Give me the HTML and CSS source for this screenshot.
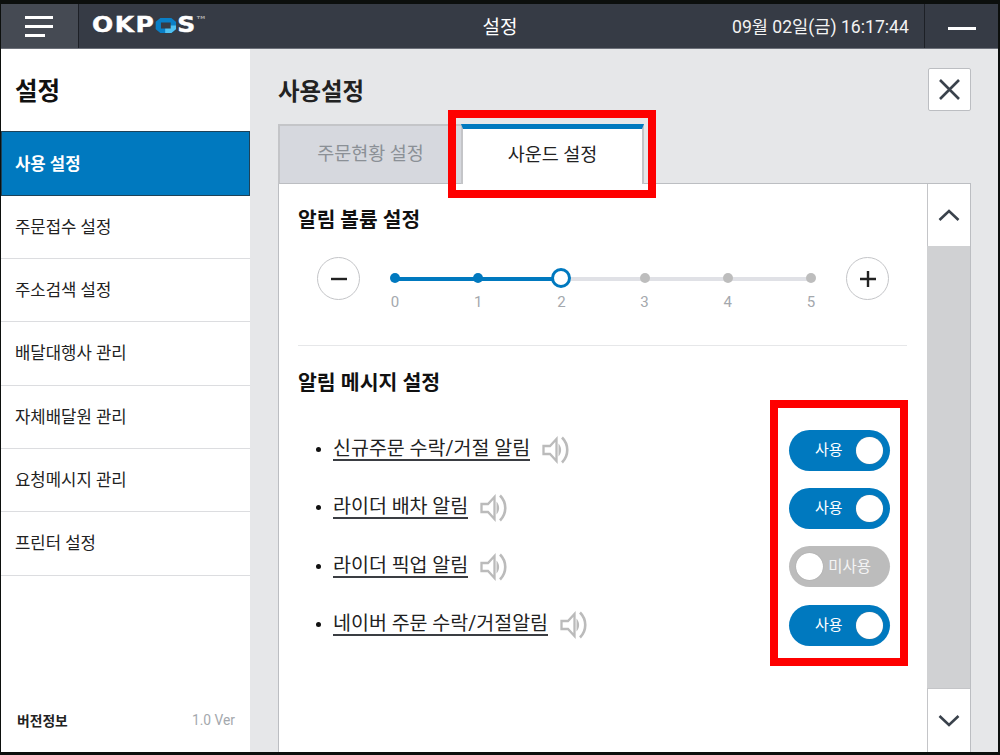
FILE: index.html
```html
<!DOCTYPE html>
<html lang="ko">
<head>
<meta charset="UTF-8">
<meta name="viewport" content="width=device-width, initial-scale=1.0">
<title>설정</title>
<link rel="stylesheet" href="styles.css">
</head>
<body>
<div class="window">
  <!-- Top bar -->
  <header class="topbar">
    <button class="menu-btn"><span></span><span></span><span></span></button>
    <div class="logo">
      <div class="logo-mark">
        <span class="logo-text">OKP</span>
        <svg class="logo-o" width="17" height="15" viewBox="0 0 17 15">
          <path d="M4 0h9l4 4v7l-4 4H4l-4-4V4z" fill="#0a7fc6"/>
          <path d="M8 7.500h9V11l-4 4H8z" fill="#4fc1f2"/>
          <rect x="4.500" y="4.500" width="8" height="6" fill="#363b45"/>
        </svg>
        <span class="logo-text">S</span>
        <span class="logo-tm">TM</span>
      </div>
    </div>
    <div class="topbar-title">설정</div>
    <div class="clock">09월 02일(금) 16:17:44</div>
    <div class="minimize"><span></span></div>
  </header>

  <div class="body-wrap">
    <!-- Sidebar -->
    <aside class="sidebar">
      <h2 class="side-title">설정</h2>
      <ul class="side-menu">
        <li class="active">사용 설정</li>
        <li>주문접수 설정</li>
        <li>주소검색 설정</li>
        <li>배달대행사 관리</li>
        <li>자체배달원 관리</li>
        <li>요청메시지 관리</li>
        <li>프린터 설정</li>
      </ul>
      <div class="version">
        <strong>버전정보</strong>
        <span>1.0 Ver</span>
      </div>
    </aside>

    <!-- Main -->
    <main class="main">
      <div class="main-head">
        <h1>사용설정</h1>
        <button class="close-btn">
          <svg width="23" height="23" viewBox="0 0 23 23"><path d="M2 2l19 19M21 2L2 21" stroke="#3a424c" stroke-width="2.6" fill="none"/></svg>
        </button>
      </div>

      <div class="tabs">
        <div class="tab">주문현황 설정</div>
        <div class="tab tab-active">사운드 설정</div>
      </div>

      <div class="panel">
        <div class="panel-content">
          <h3 class="section-title">알림 볼륨 설정</h3>
          <div class="volume">
            <button class="round-btn">
              <svg width="16" height="16" viewBox="0 0 16 16"><path d="M0 8h16" stroke="#222" stroke-width="2.4"/></svg>
            </button>
            <div class="slider">
              <div class="slider-line"></div>
              <div class="slider-fill"></div>
              <div class="stop on"><i></i><span>0</span></div>
              <div class="stop on"><i></i><span>1</span></div>
              <div class="stop current"><i></i><span>2</span></div>
              <div class="stop"><i></i><span>3</span></div>
              <div class="stop"><i></i><span>4</span></div>
              <div class="stop"><i></i><span>5</span></div>
            </div>
            <button class="round-btn">
              <svg width="16" height="16" viewBox="0 0 16 16"><path d="M0 8h16M8 0v16" stroke="#222" stroke-width="2.4"/></svg>
            </button>
          </div>

          <h3 class="section-title msg-title">알림 메시지 설정</h3>
          <ul class="msg-list">
            <li>
              <a class="msg-link">신규주문 수락/거절 알림</a>
              <svg class="speaker" width="28" height="28" viewBox="0 0 28 28"><path d="M1.500 10h6.500l6.500-7v22l-6.500-7H1.500z" stroke="#bbb" stroke-width="2.300" fill="none"/><path d="M16.500 7.500c3.500 4 3.500 9 0 13z" fill="#bbb"/><path d="M20 1.500c7 7 7 18 0 25" stroke="#bbb" stroke-width="2.600" fill="none"/></svg>
              <div class="toggle on"><span>사용</span><b></b></div>
            </li>
            <li>
              <a class="msg-link">라이더 배차 알림</a>
              <svg class="speaker" width="28" height="28" viewBox="0 0 28 28"><path d="M1.500 10h6.500l6.500-7v22l-6.500-7H1.500z" stroke="#bbb" stroke-width="2.300" fill="none"/><path d="M16.500 7.500c3.500 4 3.500 9 0 13z" fill="#bbb"/><path d="M20 1.500c7 7 7 18 0 25" stroke="#bbb" stroke-width="2.600" fill="none"/></svg>
              <div class="toggle on"><span>사용</span><b></b></div>
            </li>
            <li>
              <a class="msg-link">라이더 픽업 알림</a>
              <svg class="speaker" width="28" height="28" viewBox="0 0 28 28"><path d="M1.500 10h6.500l6.500-7v22l-6.500-7H1.500z" stroke="#bbb" stroke-width="2.300" fill="none"/><path d="M16.500 7.500c3.500 4 3.500 9 0 13z" fill="#bbb"/><path d="M20 1.500c7 7 7 18 0 25" stroke="#bbb" stroke-width="2.600" fill="none"/></svg>
              <div class="toggle off"><b></b><span>미사용</span></div>
            </li>
            <li>
              <a class="msg-link">네이버 주문 수락/거절알림</a>
              <svg class="speaker" width="28" height="28" viewBox="0 0 28 28"><path d="M1.500 10h6.500l6.500-7v22l-6.500-7H1.500z" stroke="#bbb" stroke-width="2.300" fill="none"/><path d="M16.500 7.500c3.500 4 3.500 9 0 13z" fill="#bbb"/><path d="M20 1.500c7 7 7 18 0 25" stroke="#bbb" stroke-width="2.600" fill="none"/></svg>
              <div class="toggle on"><span>사용</span><b></b></div>
            </li>
          </ul>
        </div>

        <div class="scrollbar">
          <button class="scroll-btn">
            <svg width="22" height="12" viewBox="0 0 22 12"><path d="M1.500 11L11 2l9.500 9" stroke="#3a424c" stroke-width="2.600" fill="none"/></svg>
          </button>
          <div class="scroll-track"></div>
          <button class="scroll-btn scroll-down">
            <svg width="22" height="12" viewBox="0 0 22 12"><path d="M1.500 1L11 10l9.500-9" stroke="#3a424c" stroke-width="2.600" fill="none"/></svg>
          </button>
        </div>
      </div>
    </main>
  </div>

  <!-- annotation boxes on the screenshot -->
  <div class="mark mark-tab"></div>
  <div class="mark mark-toggles"></div>
</div>
</body>
</html>
```

FILE: styles.css
```css
* {
  box-sizing: border-box;
}
html, body {
  height: 100%;
}
body {
  margin: 0;
  background-color: #0c0f0d;
  font-family: Roboto, "Noto Sans CJK KR", sans-serif;
  color: #222;
  overflow: hidden;
}
button {
  padding: 0;
  font: inherit;
  cursor: pointer;
}
ul {
  list-style: none;
  margin: 0;
  padding: 0;
}
.window {
  position: relative;
  width: 997px;
  height: 748px;
  margin: 4px 0 0 1px;
  display: flex;
  flex-direction: column;
  overflow: hidden;
}

/* top bar */
.topbar {
  height: 45px;
  flex: none;
  display: flex;
  align-items: center;
  background-color: #363b45;
  border-bottom: 1px solid #6c7079;
  color: #fff;
}
.menu-btn {
  width: 78px;
  height: 44px;
  flex: none;
  display: flex;
  flex-direction: column;
  align-items: flex-start;
  justify-content: center;
  gap: 6px;
  padding-left: 24px;
  border: none;
  border-right: 1px solid #1d2026;
  background-color: #454a53;
}
.menu-btn span {
  display: block;
  height: 3px;
  width: 28px;
  background: #fff;
}
.menu-btn span:nth-child(3) {
  width: 20px;
}
.logo {
  width: 250px;
  flex: none;
  padding: 0 0 2px 13px;
}
.logo-mark {
  display: flex;
  align-items: center;
  transform: scaleX(1.22);
  transform-origin: left center;
  font-family: "DejaVu Sans", sans-serif;
  font-weight: bold;
}
.logo-text {
  font-size: 20.500px;
  line-height: 20px;
  letter-spacing: 1.2px;
  -webkit-text-stroke: 0.4px #fff;
}
.logo-o {
  flex: none;
  margin: 0 1px 0 0;
}
.logo-tm {
  font-size: 4px;
  line-height: 5px;
  color: #aaa;
  align-self: flex-start;
}
.topbar-title {
  width: 342px;
  flex: none;
  padding-bottom: 2px;
  text-align: center;
  font-size: 19px;
}
.clock {
  flex: 1;
  padding: 0 0 2px 61px;
  font-size: 17.600px;
  white-space: nowrap;
  color: #f2f2f2;
}
.minimize {
  width: 74px;
  height: 44px;
  flex: none;
  display: flex;
  align-items: center;
  padding: 5px 0 0 23px;
  border-left: 1px solid #1d2026;
}
.minimize span {
  display: block;
  width: 28px;
  height: 3px;
  background: #fff;
}

/* layout */
.body-wrap {
  flex: 1;
  display: flex;
  min-height: 0;
}

/* sidebar */
.sidebar {
  width: 249px;
  flex: none;
  display: flex;
  flex-direction: column;
  background: #fff;
}
.side-title {
  height: 82px;
  margin: 0;
  padding: 25px 0 0 14px;
  font-size: 24.500px;
  line-height: 36px;
  font-weight: bold;
  color: #111;
}
.side-menu li {
  height: 63.330px;
  padding: 0 0 2px 14px;
  display: flex;
  align-items: center;
  font-size: 16.700px;
  border-bottom: 1px solid #dcdde0;
  color: #222;
}
.side-menu li.active {
  height: 64.600px;
  background-color: #0079bf;
  border: 1px solid #1d4258;
  padding: 0 0 0 13px;
  color: #fff;
  font-weight: bold;
}
.version {
  margin-top: auto;
  height: 64px;
  padding: 0 15px 0 16px;
  display: flex;
  justify-content: space-between;
  align-items: center;
  font-size: 13.800px;
}
.version strong {
  color: #222;
}
.version span {
  color: #a4a8ad;
}

/* main */
.main {
  flex: 1;
  min-width: 0;
  padding: 0 27px 0 28px;
  display: flex;
  flex-direction: column;
  background-color: #e6e7e9;
}
.main-head {
  height: 75px;
  flex: none;
  display: flex;
  justify-content: space-between;
  padding-top: 19px;
}
.main-head h1 {
  margin: 0;
  font-size: 23.400px;
  line-height: 48px;
  font-weight: bold;
  color: #222;
}
.close-btn {
  width: 43px;
  height: 43px;
  display: flex;
  align-items: center;
  justify-content: center;
  background: #fff;
  border: 1px solid #bcbec2;
  border-radius: 2px;
}

/* tabs */
.tabs {
  height: 60px;
  flex: none;
  display: flex;
  margin-bottom: -1px;
  position: relative;
  z-index: 1;
}
.tab {
  width: 183px;
  padding-bottom: 6px;
  display: flex;
  align-items: center;
  justify-content: center;
  font-size: 18.500px;
  color: #8b9096;
  background-color: #d6d8de;
  border: 2px solid #c4c5c8;
  border-right: none;
  border-bottom: 1px solid #bcbec2;
}
.tab-active {
  color: #222;
  background: #fff;
  padding-bottom: 8px;
  border-top: 5px solid #0079bf;
  border-left: 2px solid #c4c5c8;
  border-right: 2px solid #c4c5c8;
  border-bottom: none;
}
.panel {
  flex: 1;
  min-height: 0;
  display: flex;
  background: #fff;
  border: 1px solid #bcbec2;
  border-bottom: none;
}
.panel-content {
  flex: 1;
  min-width: 0;
  padding: 0 20px 0 19px;
}
.section-title {
  margin: 0;
  font-size: 20.300px;
  line-height: 28px;
  font-weight: bold;
  color: #111;
}
.panel-content > .section-title:first-child {
  margin-top: 22px;
}

/* volume slider */
.volume {
  height: 112px;
  padding: 23px 18px 0 19px;
  display: flex;
  align-items: flex-start;
  border-bottom: 1px solid #e6e7e9;
}
.round-btn {
  width: 43px;
  height: 43px;
  flex: none;
  display: flex;
  align-items: center;
  justify-content: center;
  background: #fff;
  border: 1px solid #c4c5c8;
  border-radius: 50%;
}
.slider {
  position: relative;
  flex: 1;
  margin: 0 25px 0 25px;
  display: flex;
  justify-content: space-between;
  padding-top: 15px;
}
.slider-line {
  position: absolute;
  left: 10px;
  right: 10px;
  top: 20px;
  height: 4px;
  background: #e0e1e6;
}
.slider-fill {
  position: absolute;
  left: 10px;
  top: 20px;
  width: 166px;
  height: 4px;
  background: #0079bf;
}
.stop {
  position: relative;
  width: 20px;
  height: 45px;
  display: flex;
  flex-direction: column;
  align-items: center;
  font-size: 15px;
  color: #a4a8ad;
}
.stop i {
  width: 10px;
  height: 10px;
  margin: 1px 0 0;
  border-radius: 50%;
  background: #bdbdbd;
}
.stop span {
  margin-top: 9px;
  line-height: 20px;
}
.stop.on i {
  background: #0079bf;
}
.stop.current i {
  width: 20px;
  height: 20px;
  margin: -4px 0 -5px;
  background: #fff;
  border: 3px solid #0079bf;
}

/* message rows */
.msg-title {
  margin-top: 23px;
  font-size: 20.500px;
}
.msg-list {
  margin-top: 24px;
}
.msg-list li {
  position: relative;
  height: 58.300px;
  display: flex;
  align-items: center;
  padding-left: 35px;
  padding-right: 17px;
}
.msg-list li::before {
  content: "";
  position: absolute;
  left: 18px;
  top: 26px;
  width: 5px;
  height: 5px;
  border-radius: 50%;
  background: #111;
}
.msg-link {
  font-size: 19.500px;
  line-height: 20px;
  color: #222;
  border-bottom: 2px solid #3a3d42;
}
.speaker {
  margin-left: 12px;
  flex: none;
}
.toggle {
  width: 101px;
  height: 41px;
  margin-left: auto;
  padding: 0 7px;
  display: flex;
  align-items: center;
  justify-content: space-between;
  border-radius: 21px;
  font-size: 15px;
  color: #fff;
}
.toggle span {
  padding-bottom: 3px;
}
.toggle.on {
  padding-left: 26px;
  background-color: #0079bf;
}
.toggle.off {
  padding: 0 19px 0 7px;
  font-size: 15.500px;
  background-color: #bcbcbc;
  color: #f4f4f4;
}
.toggle b {
  width: 27px;
  height: 27px;
  flex: none;
  border-radius: 50%;
  background: #fff;
  box-shadow: 0 0 1px #8a8a8a;
}

/* scrollbar */
.scrollbar {
  width: 43px;
  flex: none;
  display: flex;
  flex-direction: column;
  background-color: #d0d1d3;
}
.scroll-btn {
  height: 62px;
  flex: none;
  display: flex;
  align-items: center;
  justify-content: center;
  background: #fff;
  border: none;
  border-left: 1px solid #c4c5c8;
}
.scroll-down {
  height: 64px;
  border-top: 1px solid #c4c5c8;
}
.scroll-track {
  flex: 1;
}

/* red marks */
.mark {
  position: absolute;
  border: 8px solid #fe0000;
  pointer-events: none;
  z-index: 5;
}
.mark-tab {
  left: 447px;
  top: 106px;
  width: 208px;
  height: 88px;
}
.mark-toggles {
  left: 769px;
  top: 396px;
  width: 138px;
  height: 266px;
}
```
